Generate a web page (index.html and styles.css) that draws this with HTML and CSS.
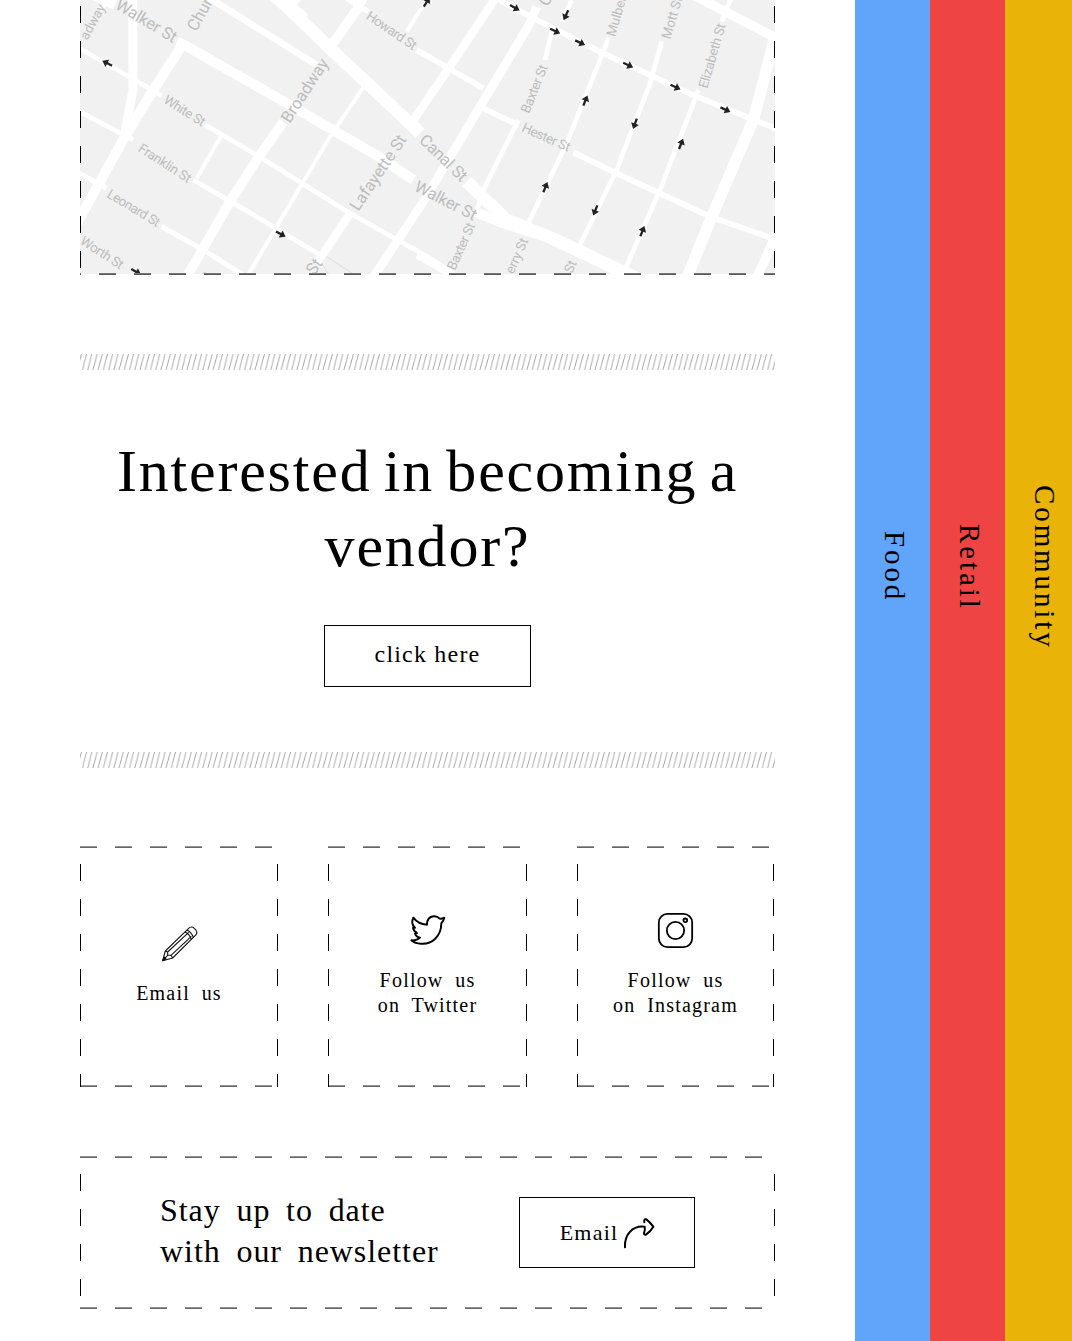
FILE: index.html
```
<!DOCTYPE html>
<html lang="en">
<head>
<meta charset="utf-8">
<title>Market</title>
<link rel="stylesheet" href="styles.css">
</head>
<body>
<div class="page">
<main class="content">
  <section class="map">
    <svg class="map-art" viewBox="30 0 2085 822" preserveAspectRatio="none" aria-label="Street map">
      <defs>
        <path id="arrow" d="M-16-3.5H0V-12L17 0 0 12V3.5H-16Z"/>
      </defs>
      <rect x="30" width="2085" height="822" fill="#f1f1f1"/>
      <g class="roads">
        <path stroke-width="30" d="M60-20L135 15M320 125L340 133 660 315 930 472 1030 540M1225 640L1300 670 1440 715 1700 835"/>
        <path stroke-width="38" d="M590-40L775 140 1020 370 1050 400M1190 545L1310 660 1440 712 1700 835"/>
        <path stroke-width="44" d="M610-20L700 60"/>
        <path stroke-width="20" d="M420-5L740 195M690-10L650 30"/>
        <path stroke-width="27" d="M188-10L189 270 160 420"/>
        <path stroke-width="30" d="M340 130L250 270 165 410 90 545 10 690"/>
        <path stroke-width="14" d="M20 140L250 272 275 288M405 374L560 465 840 640 1090 780 1150 822"/>
        <path stroke-width="14" d="M20 330L190 420M370 540L560 650 750 765"/>
        <path stroke-width="15" d="M20 515L110 565M275 680L400 750 520 825"/>
        <path stroke-width="29" d="M885-20L860 30 775 150M640 365L560 480 480 605 345 840"/>
        <path stroke-width="12" d="M885 255L780 410 530 832M455 405L380 535M1070 0L1010 95M110 10L90 30"/>
        <path stroke-width="17" d="M830-5L895 35M1040 150L1140 207 1240 265M1225 318L1345 375M1510 457L1640 520 1920 650 2120 720"/>
        <path stroke-width="25" d="M1280-10L1140 200 1020 375M840 640L740 790"/>
        <path stroke-width="26" d="M1400 20L1380 70 1230 320 1060 605 910 832"/>
        <path stroke-width="14" d="M1505 0L1475 65M1445 95L1425 180M1345 360L1240 570 1215 650M1615 115L1590 180 1490 430 1370 680M1775 125L1740 250 1640 510 1515 765M1985-10L1955 65M1885 270L1870 310 1770 570 1660 820"/>
        <path stroke-width="34" d="M2115 110L2050 360 1925 650 1850 835"/>
        <path stroke-width="28" d="M1870-15L2120 115"/>
        <path stroke-width="17" d="M1270-10L1390 55 1610 165 1880 290 2120 387"/>
        <path stroke-width="28" d="M2120 700L2060 835"/>
        <path stroke-width="15" d="M1040 768L1150 830"/>
      </g>
      <path d="M770 770L850 822M755 790L775 822" fill="none" stroke="#ddd" stroke-width="3"/>
      <g class="streets">
        <text transform="translate(133 24) rotate(31)" textLength="205">Walker St</text>
        <text transform="translate(379 97) rotate(-61)">Church</text>
        <text transform="translate(659 372) rotate(-57)" textLength="218">Broadway</text>
        <text transform="translate(865 636) rotate(-56)" textLength="262">Lafayette St</text>
        <text transform="translate(1045 424) rotate(44)" textLength="178">Canal St</text>
        <text transform="translate(1030 571) rotate(27)" textLength="202">Walker St</text>
        <g class="minor">
          <text transform="translate(52 122) rotate(-61)">adway</text>
          <text transform="translate(278 307) rotate(32)" textLength="138">White St</text>
          <text transform="translate(202 452) rotate(33)" textLength="180">Franklin St</text>
          <text transform="translate(108 590) rotate(31)" textLength="178">Leonard St</text>
          <text transform="translate(28 730) rotate(33)" textLength="145">Worth St</text>
          <text transform="translate(886 55) rotate(34)" textLength="172">Howard St</text>
          <text transform="translate(1377 342) rotate(-68)" textLength="152">Baxter St</text>
          <text transform="translate(1353 393) rotate(24)" textLength="154">Hester St</text>
          <text transform="translate(1155 813) rotate(-66)" textLength="150">Baxter St</text>
          <text transform="translate(1330 824) rotate(-66)" textLength="112">erry St</text>
          <text transform="translate(1507 822) rotate(-68)">St</text>
          <text transform="translate(1635 112) rotate(-74)">Mulber</text>
          <text transform="translate(1800 119) rotate(-73)" textLength="130">Mott St</text>
          <text transform="translate(1912 267) rotate(-74)" textLength="200">Elizabeth St</text>
          <text class="major" transform="translate(733 828) rotate(-55)">St</text>
          <text class="major" transform="translate(1433 22) rotate(-62)">C</text>
          <text transform="translate(398 842) rotate(-20)">e</text>
        </g>
      </g>
      <g fill="#222">
        <use href="#arrow" transform="translate(112 190) rotate(207)"/>
        <use href="#arrow" transform="translate(632 702) rotate(29)"/>
        <use href="#arrow" transform="translate(198 815) rotate(29)"/>
        <use href="#arrow" transform="translate(1070 6) rotate(-58)"/>
        <use href="#arrow" transform="translate(1334 23) rotate(29)"/>
        <use href="#arrow" transform="translate(1488 45) rotate(115)"/>
        <use href="#arrow" transform="translate(1455 93) rotate(25)"/>
        <use href="#arrow" transform="translate(1530 128) rotate(25)"/>
        <use href="#arrow" transform="translate(1674 195) rotate(25)"/>
        <use href="#arrow" transform="translate(1816 261) rotate(25)"/>
        <use href="#arrow" transform="translate(1966 329) rotate(25)"/>
        <use href="#arrow" transform="translate(1546 302) rotate(-68)"/>
        <use href="#arrow" transform="translate(1695 371) rotate(110)"/>
        <use href="#arrow" transform="translate(1833 432) rotate(-68)"/>
        <use href="#arrow" transform="translate(1426 562) rotate(-68)"/>
        <use href="#arrow" transform="translate(1576 631) rotate(112)"/>
        <use href="#arrow" transform="translate(1717 694) rotate(-68)"/>
      </g>
    </svg>
  </section>

  <svg class="hatch">
    <defs>
      <pattern id="hatching" width="5.23" height="16" patternUnits="userSpaceOnUse">
        <path d="M-2.8 16L1.4 0M2.43 16L6.63 0" stroke="#a2a2a2" stroke-width=".9"/>
      </pattern>
    </defs>
    <rect width="695" height="16" fill="url(#hatching)"/>
  </svg>

  <section class="vendor">
    <h2>Interested in becoming a vendor?</h2>
    <a class="button">click here</a>
  </section>

  <svg class="hatch"><rect width="695" height="16" fill="url(#hatching)"/></svg>

  <section class="cards">
    <a class="card dashed">
      <svg class="icon" viewBox="0 0 105 105">
        <g fill="none" stroke="#111" stroke-width="3.2" stroke-linejoin="round">
          <path d="M2 104L10 75 80 7Q88-1 97 7Q108 17 103 25L32 96Z"/>
          <path d="M75 12Q88 18 94 34M69 18Q83 24 88 40M10 75L17 78 17 88 27 88 32 96M17 78L80 19M27 88L88 31M2 104L17 88"/>
          <path d="M2 104L6 93 12 99Z" fill="#111"/>
        </g>
      </svg>
      <span>Email us</span>
    </a>
    <a class="card dashed">
      <svg class="icon" viewBox="0 0 105 105">
        <path d="M10 14Q25 34 51 35Q51 12 71 10Q82 9 89 17Q96 18 103 14Q101 25 94 31Q94 60 75 78Q58 94 33 92Q15 92 4 82Q20 84 30 74Q18 72 15 61L21 60Q10 54 9 44L15 44Q1 31 10 14Z" fill="none" stroke="#000" stroke-width="5.8" stroke-linejoin="round"/>
      </svg>
      <span>Follow us<br>on Twitter</span>
    </a>
    <a class="card dashed">
      <svg class="icon" viewBox="0 0 105 105">
        <g fill="none" stroke="#000" stroke-width="5.4">
          <rect x="2.5" y="2.5" width="100" height="100" rx="26"/>
          <circle cx="52.5" cy="52.5" r="26"/>
          <circle cx="82" cy="22" r="5.5"/>
        </g>
      </svg>
      <span>Follow us<br>on Instagram</span>
    </a>
  </section>

  <section class="newsletter dashed">
    <p>Stay up to date<br>with our newsletter</p>
    <a class="button button-email">Email
      <svg class="icon-arrow" viewBox="0 0 90 90">
        <path d="M3 88C1 50 25 22 62 26M61 13Q59 2 67 4Q79 13 88 26Q80 40 66 50Q60 52 60 45Q64 36 62 26" fill="none" stroke="#000" stroke-width="6" stroke-linecap="round" stroke-linejoin="round"/>
      </svg>
    </a>
  </section>
</main>
<nav class="tabs">
  <a class="tab tab-food">Food</a>
  <a class="tab tab-retail">Retail</a>
  <a class="tab tab-community">Community</a>
</nav>
</div>
</body>
</html>
```
FILE: styles.css
```
* { box-sizing: border-box; }
body {
  margin: 0;
  overflow: hidden;
  background: #fff;
  color: #000;
  font-family: "Liberation Serif", "Times New Roman", serif;
}
.page { display: flex; height: 1341px; }
.content { flex: none; width: 855px; padding: 0 80px; }

.map { position: relative; height: 275px; }
.map-art { display: block; width: 695px; height: 274px; }
.roads path { fill: none; stroke: #fff; stroke-linejoin: round; }
.streets { font-family: Roboto, sans-serif; font-size: 50px; fill: #bdbdbd; }
.minor { font-size: 40px; }
.major { font-size: 50px; }

/* Long dashes: 17px stroke, 18px gap */
.dashed, .map::after {
  --soft: repeating-linear-gradient(90deg, #929292 0 17px, transparent 17px 35px);
  --hard: repeating-linear-gradient(90deg, #666 0 17px, transparent 17px 35px);
  --side: linear-gradient(transparent 18px, #000 18px);
  background:
    var(--side) 0 0 / 1px 35px repeat-y,
    var(--side) 100% 0 / 1px 35px repeat-y,
    var(--soft) 0 0 / 100% 1px no-repeat,
    var(--hard) 0 1px / 100% 1px no-repeat,
    var(--soft) 0 calc(100% - 1px) / 100% 1px no-repeat,
    var(--hard) 0 100% / 100% 1px no-repeat;
}
.map::after {
  content: "";
  position: absolute;
  inset: 0;
  background:
    var(--side) 0 -12px / 1px 35px repeat-y,
    var(--side) 100% -12px / 1px 35px repeat-y,
    linear-gradient(90deg, #777 17px, transparent 17px) -16px calc(100% - 1px) / 35px 1px repeat-x,
    linear-gradient(90deg, #555 17px, transparent 17px) -16px 100% / 35px 1px repeat-x;
}

.hatch { display: block; width: 695px; height: 16px; margin-top: 79px; }

.vendor { display: flex; flex-direction: column; align-items: center; padding-top: 64px; height: 303px; }
h2 {
  margin: 0;
  font-size: 60px;
  line-height: 75px;
  font-weight: 400;
  letter-spacing: 1.8px;
  word-spacing: -4.5px;
  text-align: center;
}
.button {
  display: flex;
  flex: none;
  align-items: center;
  justify-content: center;
  width: 207px;
  height: 62px;
  margin-top: 41px;
  padding-bottom: 3px;
  border: 1px solid #000;
  font-size: 24px;
  letter-spacing: 1.2px;
}

.cards { display: grid; grid-template-columns: 198px 199px 197px; gap: 50px; margin-top: 78px; }
.card {
  display: flex;
  flex-direction: column;
  align-items: center;
  justify-content: center;
  gap: 20px;
  height: 241px;
  padding-bottom: 2px;
  font-size: 20px;
  line-height: 25px;
  letter-spacing: 1.2px;
  word-spacing: 5.5px;
  text-align: center;
}
.icon { width: 35px; height: 35px; overflow: visible; }

.newsletter {
  display: flex;
  align-items: center;
  justify-content: space-between;
  height: 153px;
  margin-top: 69px;
  padding: 0 80px;
}
.newsletter p {
  margin: 0;
  padding-bottom: 3px;
  font-size: 32px;
  line-height: 41px;
  letter-spacing: .95px;
  word-spacing: 6.8px;
}
.button-email { width: 176px; height: 71px; margin: 0; padding: 0; gap: 6px; font-size: 22px; letter-spacing: 1.2px; }
.icon-arrow { width: 30px; height: 30px; overflow: visible; }

.tabs { display: flex; flex: none; }
.tab {
  display: flex;
  align-items: center;
  justify-content: center;
  width: 75px;
  padding: 0 0 207px 3px;
  writing-mode: vertical-rl;
  font-size: 29px;
  letter-spacing: 2.9px;
}
.tab-food { background: #60a5fa; }
.tab-retail { background: #ef4444; }
.tab-community { background: #eab308; }
```
